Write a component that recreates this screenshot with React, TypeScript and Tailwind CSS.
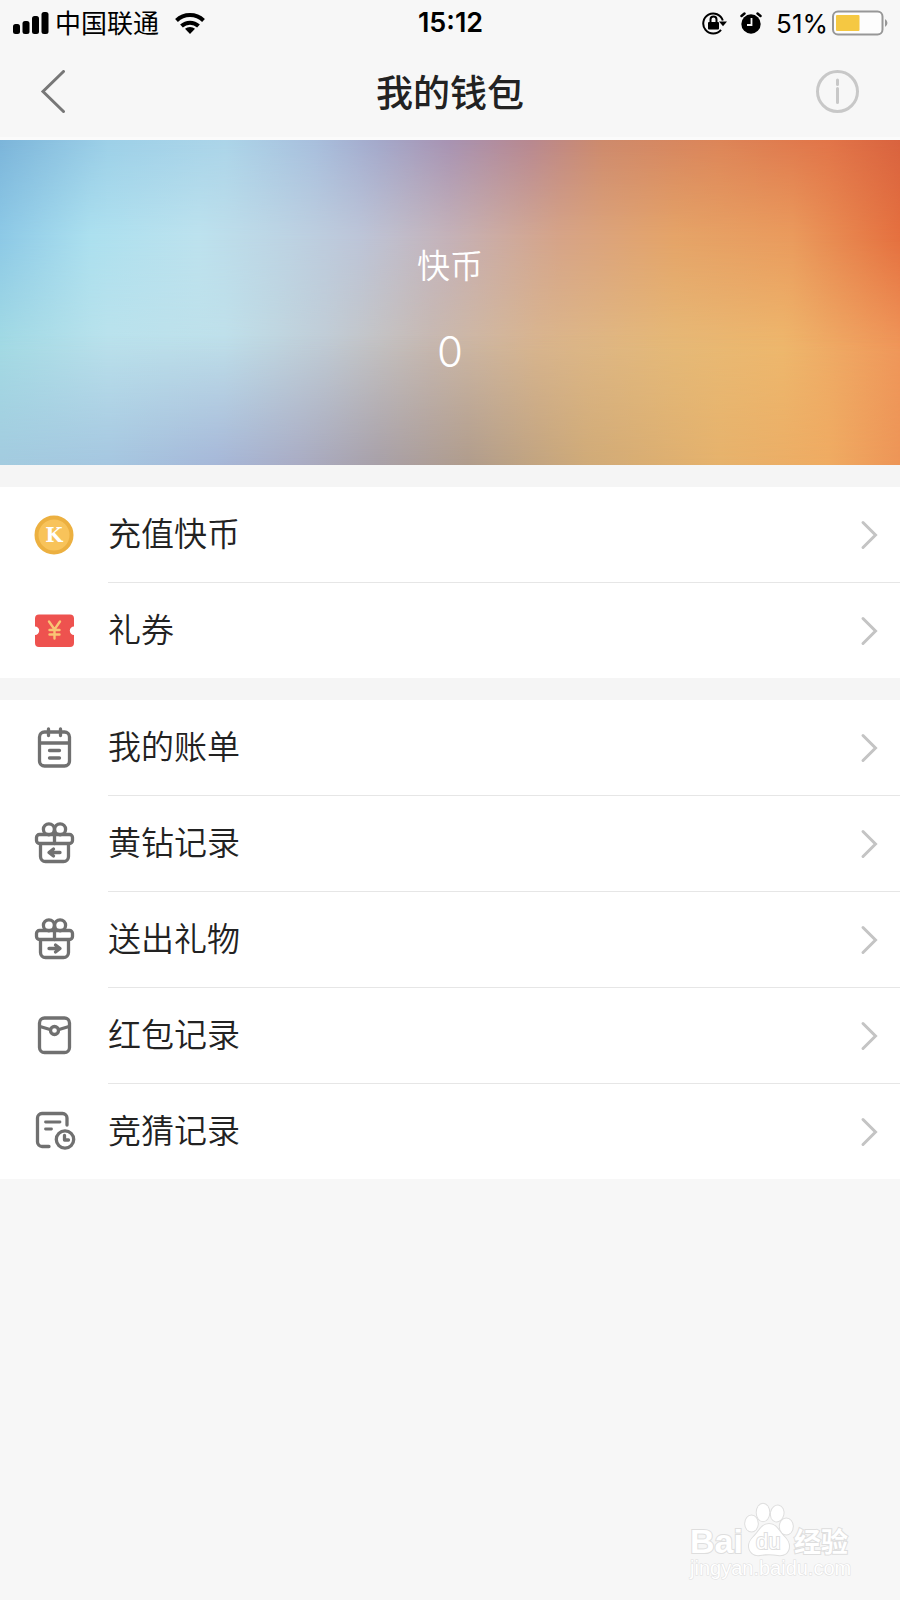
import type { ElementType } from 'react'

interface MenuItem {
  label: string
  icon: ElementType
}

function CoinIcon() {
  return (
    <svg viewBox="0 0 44 44" className="size-11">
      <circle cx="22" cy="22" r="17.500" fill="#f8c35a" stroke="#ecb040" strokeWidth="4" />
      <text x="22" y="29" textAnchor="middle" fontSize="20" fontWeight="700" fill="#fff"
        className="font-['DejaVu_Serif',serif]">K</text>
    </svg>
  )
}

function TicketIcon() {
  return (
    <svg viewBox="0 0 44 44" className="size-11">
      <path fill="#ee524f" d="M7 5.500h31a4 4 0 0 1 4 4V17.500a4.200 4.200 0 0 0 0 8.400V34a4 4 0 0 1-4 4H7a4 4 0 0 1-4-4V25.900a4.200 4.200 0 0 0 0-8.400V9.500a4 4 0 0 1 4-4z" />
      <path fill="none" stroke="#f9c574" strokeWidth="2.400" strokeLinecap="round" d="M17 12.500l5.500 8 5.500-8M22.500 20.500v9M17.500 21h10M17.500 25.500h10" />
    </svg>
  )
}

const LINE = {
  viewBox: '0 0 44 44',
  className: 'size-11',
  fill: 'none',
  stroke: '#707070',
  strokeWidth: 3.3,
  strokeLinecap: 'round',
  strokeLinejoin: 'round',
} as const

function BillIcon() {
  return (
    <svg {...LINE}>
      <rect x="7.500" y="6" width="30" height="34" rx="5" />
      <path d="M8 17h29M16.500 3v6.500M28.500 3v6.500M17.500 24.500h10M17.500 32h10" />
    </svg>
  )
}

function GiftBase() {
  return (
    <>
      <rect x="4.500" y="12.500" width="36" height="9" rx="3" />
      <path d="M8.500 22V34.500a5 5 0 0 0 5 5h18a5 5 0 0 0 5-5V22M22.500 8v13.500" />
      <circle cx="16.900" cy="7.300" r="5.500" />
      <circle cx="28.100" cy="7.300" r="5.500" />
    </>
  )
}

function GiftInIcon() {
  return (
    <svg {...LINE}>
      <GiftBase />
      <path d="M28 30.500H18M21.500 27l-4.500 3.500 4.500 3.500" />
    </svg>
  )
}

function GiftOutIcon() {
  return (
    <svg {...LINE}>
      <GiftBase />
      <path d="M17 30.500h10M23.500 27l4.500 3.500-4.500 3.500" />
    </svg>
  )
}

function EnvelopeIcon() {
  return (
    <svg {...LINE}>
      <rect x="7.500" y="4" width="30" height="34.500" rx="5" />
      <circle cx="22.500" cy="16.500" r="4" />
      <path d="M8 12.500l10 3M37 12.500l-10 3" />
    </svg>
  )
}

function GuessIcon() {
  return (
    <svg {...LINE}>
      <path d="M17 36.500h-7A4.500 4.500 0 0 1 5.500 32V8A4.500 4.500 0 0 1 10 3.500h20.500A4.500 4.500 0 0 1 35 8V15" />
      <path d="M13.500 12h14.500M13.500 19h6" strokeWidth="2.800" />
      <circle cx="33" cy="29.500" r="8.700" />
      <path d="M32.500 25.500v4.500h4" />
    </svg>
  )
}

const GROUPS: MenuItem[][] = [
  [
    { label: '充值快币', icon: CoinIcon },
    { label: '礼券', icon: TicketIcon },
  ],
  [
    { label: '我的账单', icon: BillIcon },
    { label: '黄钻记录', icon: GiftInIcon },
    { label: '送出礼物', icon: GiftOutIcon },
    { label: '红包记录', icon: EnvelopeIcon },
    { label: '竞猜记录', icon: GuessIcon },
  ],
]

function StatusBar() {
  return (
    <div className="flex h-[46px] items-center pr-3 pl-[13px] text-[26px] text-black">
      <div className="flex flex-1 items-center">
        <svg viewBox="0 0 36 22" className="h-[22px] w-9">
          <rect x="0" y="12" width="7" height="10" rx="2.500" />
          <rect x="9.500" y="9" width="7" height="13" rx="2.500" />
          <rect x="19" y="4" width="7" height="18" rx="2.500" />
          <rect x="28.500" y="0" width="7" height="22" rx="2.500" />
        </svg>
        <span className="ml-1.5">中国联通</span>
        <svg viewBox="0 0 30 22" className="ml-4 h-[22px] w-[30px]">
          <g fill="none" stroke="#000" strokeWidth="4">
            <path d="M1.500 8.500a19.500 19.500 0 0 1 27 0" />
            <path d="M6.500 14a12.500 12.500 0 0 1 17 0" />
          </g>
          <path d="M15 22l-5-5.200a7.500 7.500 0 0 1 10 0z" />
        </svg>
      </div>
      <span className="text-[27px] font-semibold">15:12</span>
      <div className="flex flex-1 items-center justify-end">
        {/* Rotation lock */}
        <svg viewBox="0 0 26 24" className="h-6 w-[26px]">
          <path fill="none" stroke="#000" strokeWidth="2" d="M20.800 9.500A10 10 0 1 0 19 18.800" />
          <path d="M17 10.500h8l-4 4.800z" />
          <rect x="6" y="11" width="11" height="7.500" rx="1" />
          <path fill="none" stroke="#000" strokeWidth="2" d="M8.500 11V8.500a3 3 0 0 1 6 0V11" />
        </svg>
        {/* Alarm */}
        <svg viewBox="0 0 22 22" className="ml-3 size-[22px]">
          <circle cx="11" cy="12" r="9.700" />
          <path fill="none" stroke="#000" strokeWidth="2.500" strokeLinecap="round" d="M1.500 4l3-2.500M20.500 4l-3-2.500" />
          <path fill="none" stroke="#f7f7f7" strokeWidth="1.800" d="M11.500 6v7H7" />
        </svg>
        <span className="mr-1 ml-3.5">51%</span>
        <svg viewBox="0 0 56 26" className="h-[26px] w-14">
          <rect x="1" y="1.500" width="49.500" height="23" rx="5" fill="#fdfdfd" stroke="#979797" strokeWidth="2" />
          <rect x="4" y="5" width="23.500" height="16" rx="1" fill="#f5c842" />
          <path d="M53 9a4.500 4.500 0 0 1 0 8z" fill="#979797" />
        </svg>
      </div>
    </div>
  )
}

function NavBar() {
  return (
    <header className="flex h-[94px] items-center justify-between border-b-[3px] border-[#fbfbfb] px-10">
      <button aria-label="返回" className="w-11">
        <svg viewBox="0 0 44 44" className="size-11" fill="none" stroke="#777" strokeWidth="3" strokeLinecap="round">
          <path d="M23.500 1.500L3 21.500l20.500 20" />
        </svg>
      </button>
      <h1 className="font-['Noto_Sans_CJK_SC',sans-serif] text-[37px] font-medium text-[#222]">我的钱包</h1>
      <button aria-label="说明" className="w-11">
        <svg viewBox="0 0 44 44" className="size-11" fill="none" stroke="#c8c8c8" strokeWidth="3">
          <circle cx="21.500" cy="21.500" r="20" />
          <path d="M21.500 18.500v14M21.500 10v4.500" strokeLinecap="round" />
        </svg>
      </button>
    </header>
  )
}

// Each layer is one horizontal band of colour, faded in below the previous one
function Balance() {
  return (
    <section className="relative h-[325px] bg-[linear-gradient(90deg,#7cb5da,#9dd0e8_12%,#acd5e9_25%,#a8bfdd_35%,#a4a9cb_42%,#a893b2_50%,#b88890_59%,#ce8a6c_67%,#dd8558_80%,#e27549_92%,#d9633f)] pt-25 text-center text-white">
      <div className="absolute inset-0 bg-[linear-gradient(90deg,#8dc9e6,#ace0ef_10%,#bde2ee_22%,#bdd3e3_32%,#bdc5d8_40%,#c5b2b8_50%,#d6a488_62%,#e5a468_75%,#ea9b5d_88%,#e5703f)] [mask-image:linear-gradient(transparent,black_30%)]" />
      <div className="absolute inset-0 bg-[linear-gradient(90deg,#a3dbe4,#bbe2ec_12%,#bfe0ea_25%,#c1cdd6_36%,#c8b9b0_48%,#dab68e_60%,#e6ba78_75%,#eeb86d_87%,#f0975a)] [mask-image:linear-gradient(transparent_30%,black_65%)]" />
      <div className="absolute inset-0 bg-[linear-gradient(90deg,#a3cbdf,#a5c6e0_12%,#a6b7d8_24%,#a9acc4_33%,#a8a0a8_42%,#b09c8c_52%,#cfaa78_65%,#e6b26c_80%,#efab62_92%,#ed9557)] [mask-image:linear-gradient(transparent_60%,black)]" />
      <div className="relative">
        <p className="font-['Noto_Sans_CJK_SC',sans-serif] text-[33px] leading-12 font-[350]">快币</p>
        <p className="mt-8 text-[42px] leading-16 font-[350]">0</p>
      </div>
    </section>
  )
}

function MenuRow({ item, last }: { item: MenuItem; last: boolean }) {
  const Icon = item.icon
  return (
    <li>
      <a href="#" className="flex items-center pl-8">
        <Icon />
        <span className={last ? 'ml-8 flex h-[95px] flex-1 items-center justify-between pr-[22px]' : 'ml-8 flex h-24 flex-1 items-center justify-between border-b border-[#e6e6e6] pr-[22px]'}>
          <span className="text-[33px] font-[350] text-[#222]">{item.label}</span>
          <svg viewBox="0 0 18 30" className="h-[30px] w-[18px]" fill="none" stroke="#c4c4c4" strokeWidth="3" strokeLinecap="round">
            <path d="M3 2.500L15.500 15 3 27.500" />
          </svg>
        </span>
      </a>
    </li>
  )
}

function Watermark() {
  return (
    <footer className="mt-auto flex justify-end pr-11 pb-4">
      <svg viewBox="0 0 170 84" className="h-[84px] w-[170px]" fill="#fff" stroke="#dedede" strokeWidth="2" paintOrder="stroke">
        <text x="4" y="53" fontSize="34" fontWeight="700" className="font-['Liberation_Sans',sans-serif]">Bai</text>
        <g strokeWidth="2">
          <ellipse cx="65.500" cy="23.500" rx="6.300" ry="8" />
          <ellipse cx="77" cy="12.500" rx="6.300" ry="8.700" />
          <ellipse cx="91.300" cy="13.500" rx="6.300" ry="8" transform="rotate(12 91 13)" />
          <ellipse cx="100.300" cy="26.500" rx="6.500" ry="8" />
          <path d="M83 24c6 0 9 5 12 9s8 7 8 13c0 7-5 10-11 9-6-1-12-1-18 0-6 1-11-3-11-9s5-9 8-13 6-9 12-9z" />
        </g>
        <text x="70" y="49" fontSize="22" className="font-['Liberation_Sans',sans-serif]">du</text>
        <text x="108" y="52" fontSize="27" fontWeight="700">经验</text>
        <text x="4" y="75" fontSize="20" strokeWidth="1" className="font-['Liberation_Sans',sans-serif]">jingyan.baidu.com</text>
      </svg>
    </footer>
  )
}

export default function App() {
  return (
    <div className="flex min-h-screen flex-col bg-[#f7f7f7] font-[Inter,'Noto_Sans_CJK_SC',sans-serif]">
      <StatusBar />
      <NavBar />
      <Balance />
      <main className="flex flex-col gap-[22px] bg-[#f5f5f5] pt-[22px]">
        {GROUPS.map((items, i) => (
          <ul key={i} className="bg-white">
            {items.map((item, j) => (
              <MenuRow key={item.label} item={item} last={j === items.length - 1} />
            ))}
          </ul>
        ))}
      </main>
      <Watermark />
    </div>
  )
}
